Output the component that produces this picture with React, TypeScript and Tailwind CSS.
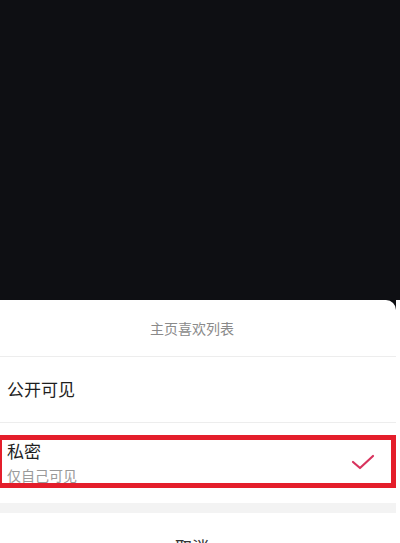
// 主页喜欢列表 可见范围选择シート（私密を選択中、赤枠で強調）

const font = {
  fontFamily: '"Noto Sans", "Noto Sans CJK SC", sans-serif',
};

function Check() {
  return (
    <svg width="24" height="24" viewBox="0 0 24 24" fill="none" className="shrink-0">
      <path d="M2 11l7 6 13-12" stroke="#d8335d" strokeWidth="2.2" strokeLinecap="round" strokeLinejoin="round" />
    </svg>
  );
}

export default function App() {
  return (
    <div className="h-[543px] w-[400px] overflow-hidden bg-white" style={font}>
      <div className="h-[300px] bg-[#0e0f13]" />
      <div className="-ml-3 w-[408px] bg-[#0e0f13]">
        <div className="rounded-t-[10px] bg-white">
          <div className="flex h-[56px] items-center justify-center text-[14px] text-[#8a8a8a]">主页喜欢列表</div>
          <div className="h-px bg-[#ededed]" />

          <div className="flex h-[65px] items-center pl-[19px] text-[17px] text-[#1e1e1e]">公开可见</div>
          <div className="h-px bg-[#ededed]" />

          <div className="relative flex h-[80px] items-center justify-between pl-[19px] pr-[21px]">
            <div className="flex flex-col gap-[2px]">
              <span className="text-[17px] leading-[24px] text-[#1e1e1e]">私密</span>
              <span className="text-[14px] leading-[20px] text-[#9a9a9a]">仅自己可见</span>
            </div>
            <Check />
            {/* 強調用の赤枠（内容の上に重なる） */}
            <div className="pointer-events-none absolute left-[9px] right-0 top-[12px] h-[53px] border-[5px] border-[#e41e2b]" />
          </div>

          <div className="h-[10px] bg-[#f3f3f3]" />
          <div className="pt-[23px] text-center text-[17px] leading-[24px] text-[#333]">取消</div>
        </div>
      </div>
    </div>
  );
}
